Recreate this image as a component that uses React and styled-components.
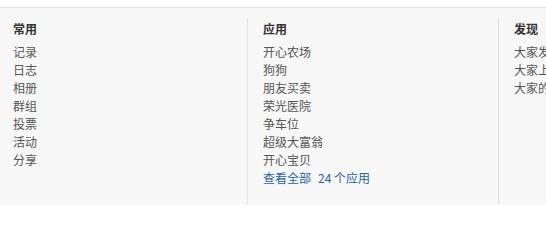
import React from 'react';
import styled, { createGlobalStyle } from 'styled-components';

const GlobalStyle = createGlobalStyle`
	html, body {
		margin: 0;
		padding: 0;
		background: #ffffff;
		overflow: hidden;
	}
	body {
		font-family: 'Noto Sans CJK SC', 'Liberation Sans', sans-serif;
		font-size: 12px;
	}
`;

const Panel = styled.div`
	margin-top: 7px;
	border-top: 1px solid #e2e2e2;
	background: #f7f7f7;
	height: 198px;
	display: flex;
	width: max-content;
	padding-top: 10px;
	box-sizing: border-box;
`;

const Column = styled.div`
	width: ${props => (props.$first ? '247px' : '251px')};
	box-sizing: border-box;
	padding-left: ${props => (props.$first ? '13px' : '15px')};
	padding-top: 2px;
	border-left: ${props => (props.$first ? 'none' : '1px solid #e3e3e3')};
	white-space: nowrap;
	overflow: hidden;
`;

const Title = styled.h3`
	margin: 0 0 5px;
	font-size: 12px;
	line-height: 18px;
	font-weight: bold;
	color: #333;
`;

const List = styled.ul`
	list-style: none;
	margin: 0;
	padding: 0;
`;

const Item = styled.li`
	line-height: 18px;
	height: 18px;
	color: ${props => (props.$link ? '#2b63a6' : '#555')};
`;

const Count = styled.span`
	margin-left: 7px;
`;

const columns = [
	{ title: '常用', items: ['记录', '日志', '相册', '群组', '投票', '活动', '分享'] },
	{ title: '应用', items: ['开心农场', '狗狗', '朋友买卖', '荣光医院', '争车位', '超级大富翁', '开心宝贝'], more: true },
	{ title: '发现', items: ['大家发布的记录', '大家上传的照片', '大家的分享'] }
];

const App = () => (
	<>
		<GlobalStyle />
		<Panel>
			{columns.map((col, i) => (
				<Column key={col.title} $first={i === 0}>
					<Title>{col.title}</Title>
					<List>
						{col.items.map(item => <Item key={item}>{item}</Item>)}
						{col.more && (
							<Item $link>
								查看全部<Count>24 个应用</Count>
							</Item>
						)}
					</List>
				</Column>
			))}
		</Panel>
	</>
);

export default App;
